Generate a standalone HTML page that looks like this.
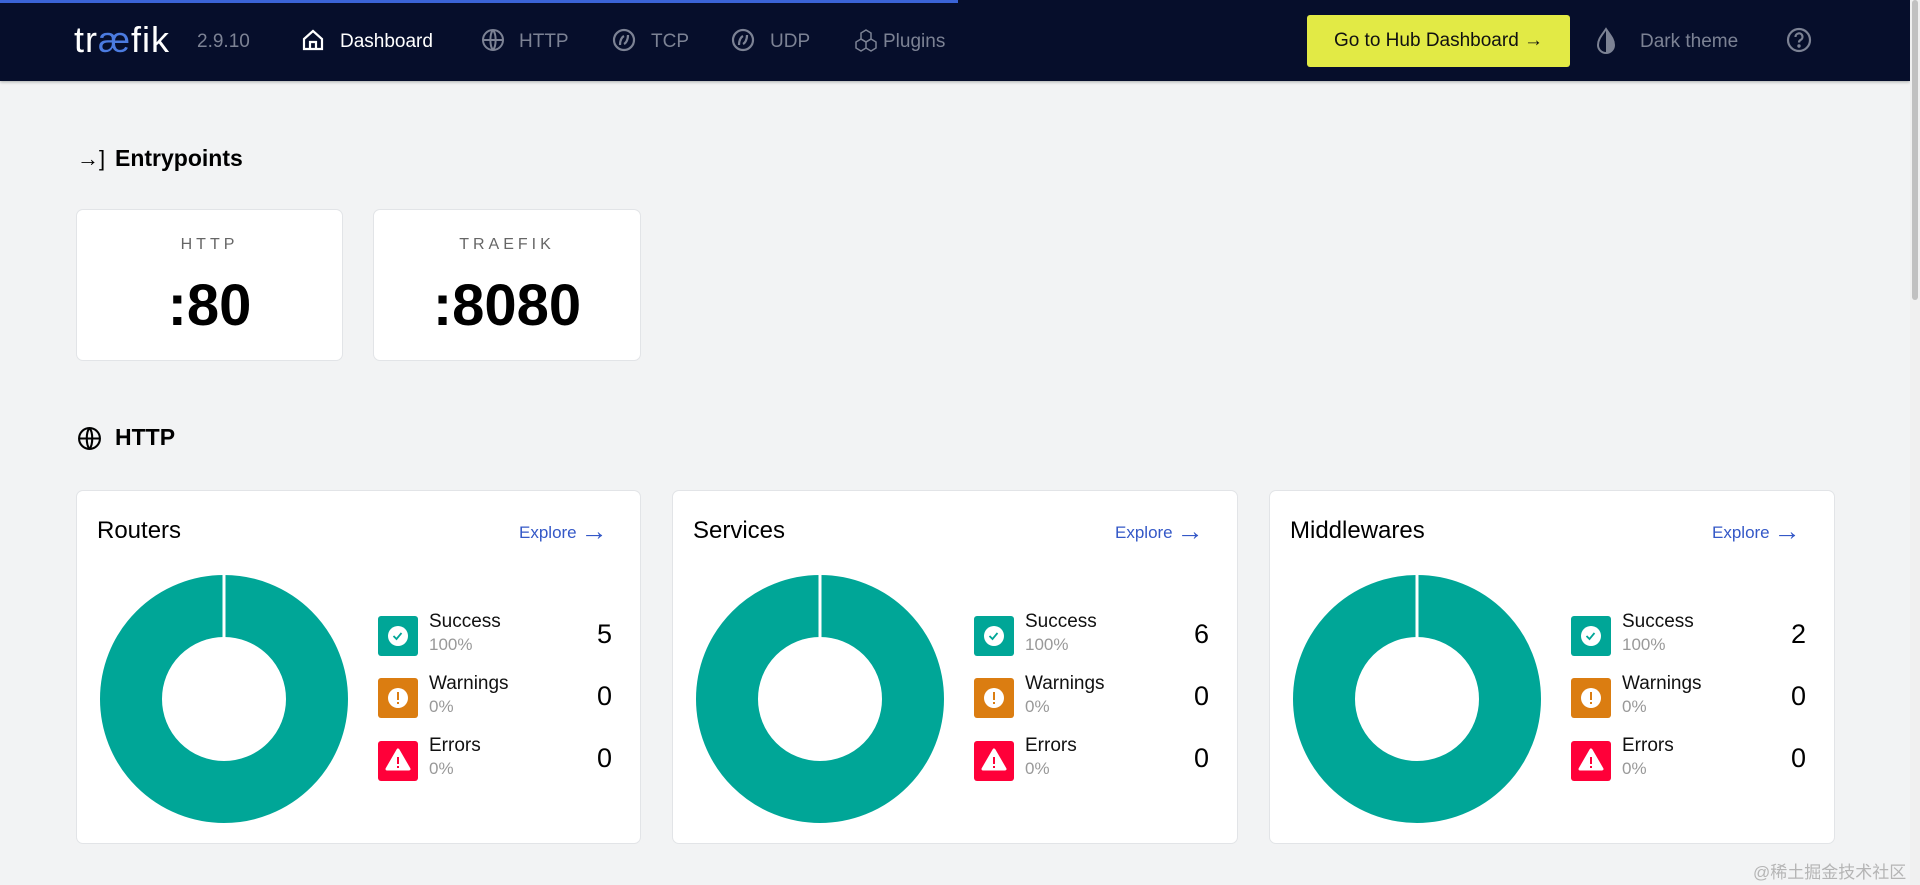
<!DOCTYPE html>
<html><head><meta charset="utf-8"><style>
*{margin:0;padding:0;box-sizing:border-box}
body{width:1920px;height:885px;overflow:hidden;background:#f2f3f4;font-family:"Liberation Sans",sans-serif;position:relative}
.a{position:absolute;white-space:nowrap}
.hdr{position:absolute;left:0;top:0;width:1910px;height:81px;background:#060e2b;box-shadow:0 1px 3px rgba(0,0,0,.3)}
.nav{color:#7c8294;font-size:19px;top:31px}
.card{position:absolute;background:#fff;border:1px solid #e2e4e7;border-radius:7px}
.ep .lbl{position:absolute;left:0;right:0;top:26px;text-align:center;font-size:16px;letter-spacing:4px;color:#666}
.ep .val{position:absolute;left:0;right:0;top:62px;text-align:center;font-size:58px;font-weight:bold;color:#000}
.title{left:20px;top:26px;font-size:24px;color:#000}
.explore{left:442px;top:23px;font-size:17px;color:#3458c7}
.explore span{font-size:27px;position:relative;top:2px;margin-left:4px}
.box{position:absolute;left:301px;width:40px;height:40px;border-radius:3px}
.lt{position:absolute;left:352px;font-size:19px;color:#111}
.lp{position:absolute;left:352px;font-size:17px;color:#999}
.num{position:absolute;right:28px;font-size:27px;color:#000}
</style></head><body>
<div class="hdr"></div>
<div class="a" style="left:0;top:0;width:958px;height:3px;background:#3a63d6"></div>
<div class="a" style="left:74px;top:19px;font-size:36px;color:#fff;letter-spacing:1px">tr<span style="color:#4b7be0">æ</span>fik</div>
<div class="a" style="left:197px;top:31px;font-size:19px;color:#7c8294">2.9.10</div>
<svg class="a" style="left:301px;top:28px" width="24" height="24" viewBox="0 0 24 24" fill="none" stroke="#fff" stroke-width="2.2"><path d="M3 11L12 3l9 8v10H3z"/><path d="M9 21v-7h6v7"/></svg>
<div class="a nav" style="left:340px;color:#fff">Dashboard</div>
<svg class="a" style="left:481px;top:28px" width="24" height="24" viewBox="0 0 24 24" fill="none" stroke="#7c8294" stroke-width="2"><circle cx="12" cy="12" r="10"/><path d="M2 12h20M12 2c-3.5 4-3.5 16 0 20M12 2c3.5 4 3.5 16 0 20"/></svg>
<div class="a nav" style="left:519px">HTTP</div>
<svg class="a" style="left:612px;top:28px" width="24" height="24" viewBox="0 0 24 24" fill="none" stroke="#7c8294" stroke-width="2.2"><circle cx="12" cy="12" r="10"/><path d="M8 17c0-5 2-8 4-9M16 7c0 5-2 8-4 9"/></svg>
<div class="a nav" style="left:651px">TCP</div>
<svg class="a" style="left:731px;top:28px" width="24" height="24" viewBox="0 0 24 24" fill="none" stroke="#7c8294" stroke-width="2.2"><circle cx="12" cy="12" r="10"/><path d="M8 17c0-5 2-8 4-9M16 7c0 5-2 8-4 9"/></svg>
<div class="a nav" style="left:770px">UDP</div>
<svg class="a" style="left:853px;top:28px" width="26" height="26" viewBox="0 0 26 26" fill="none" stroke="#7c8294" stroke-width="1.5"><path d="M13 2l5 3v6l-5 3-5-3V5z"/><path d="M8 11l5 3v6l-5 3-5-3v-6zM18 11l5 3v6l-5 3-5-3v-6z"/></svg>
<div class="a nav" style="left:883px">Plugins</div>
<div class="a" style="left:1307px;top:15px;width:263px;height:52px;background:#e2ea45;border-radius:3px;font-size:19px;color:#111;text-align:center;line-height:52px">Go to Hub Dashboard →</div>
<svg class="a" style="left:1594px;top:27px" width="24" height="28" viewBox="0 0 24 28"><path d="M12 2C8 8 4 12 4 18a8 8 0 0 0 16 0c0-6-4-10-8-16z" fill="none" stroke="#7c8294" stroke-width="2"/><path d="M12 2C16 8 20 12 20 18a8 8 0 0 1-8 8z" fill="#7c8294"/></svg>
<div class="a nav" style="left:1640px">Dark theme</div>
<svg class="a" style="left:1786px;top:27px" width="26" height="26" viewBox="0 0 26 26" fill="none" stroke="#7c8294" stroke-width="2.2"><circle cx="13" cy="13" r="11"/><path d="M9.5 10a3.5 3.5 0 1 1 5 3c-1.2.6-1.5 1.3-1.5 2.5"/><circle cx="13" cy="19" r=".6" fill="#7c8294"/></svg>
<div class="a" style="left:1910px;top:0;width:10px;height:885px;background:#f0f0f0"></div>
<div class="a" style="left:1912px;top:0;width:6px;height:300px;background:#c1c1c1;border-radius:3px"></div>

<div class="a" style="left:77px;top:146px;font-size:22px;color:#000">→]</div>
<div class="a" style="left:115px;top:145px;font-size:23px;color:#000;font-weight:600">Entrypoints</div>
<div class="card ep" style="left:76px;top:209px;width:267px;height:152px"><div class="lbl">HTTP</div><div class="val">:80</div></div>
<div class="card ep" style="left:373px;top:209px;width:268px;height:152px"><div class="lbl">TRAEFIK</div><div class="val">:8080</div></div>

<svg class="a" style="left:77px;top:426px" width="25" height="25" viewBox="0 0 24 24" fill="none" stroke="#000" stroke-width="2"><circle cx="12" cy="12" r="10"/><path d="M2 12h20M12 2c-3.5 4-3.5 16 0 20M12 2c3.5 4 3.5 16 0 20"/></svg>
<div class="a" style="left:115px;top:424px;font-size:23px;color:#000;font-weight:600">HTTP</div>

<div class="card" style="left:76px;top:490px;width:565px;height:354px">
<div class="a title">Routers</div><div class="a explore">Explore<span>→</span></div>
<svg class="a" style="left:21px;top:82px" width="252" height="252"><circle cx="126" cy="126" r="93" fill="none" stroke="#00a697" stroke-width="62"/><rect x="124.5" y="0" width="3" height="66" fill="#fff"/></svg>
<div class="box" style="top:125px;background:#00a697"><svg width="40" height="40"><circle cx="20" cy="20" r="10" fill="#fff"/><path d="M15.5 20l3 3 5-6" fill="none" stroke="#00a697" stroke-width="1.8"/></svg></div>
<div class="lt" style="top:120px">Success</div><div class="lp" style="top:144px">100%</div><div class="num" style="top:128px">5</div>
<div class="box" style="top:187px;background:#db7d11"><svg width="40" height="40"><circle cx="20" cy="20" r="10" fill="#fff"/><rect x="19" y="14" width="2" height="8" fill="#db7d11"/><rect x="19" y="24" width="2" height="2" fill="#db7d11"/></svg></div>
<div class="lt" style="top:182px">Warnings</div><div class="lp" style="top:206px">0%</div><div class="num" style="top:190px">0</div>
<div class="box" style="top:250px;background:#ff0039"><svg width="40" height="40"><path d="M20 9l11 19H9z" fill="#fff" stroke="#fff" stroke-width="3" stroke-linejoin="round"/><rect x="19" y="16" width="2" height="7" fill="#ff0039"/><rect x="19" y="25" width="2" height="2" fill="#ff0039"/></svg></div>
<div class="lt" style="top:244px">Errors</div><div class="lp" style="top:268px">0%</div><div class="num" style="top:252px">0</div>
</div>

<div class="card" style="left:672px;top:490px;width:566px;height:354px">
<div class="a title">Services</div><div class="a explore">Explore<span>→</span></div>
<svg class="a" style="left:21px;top:82px" width="252" height="252"><circle cx="126" cy="126" r="93" fill="none" stroke="#00a697" stroke-width="62"/><rect x="124.5" y="0" width="3" height="66" fill="#fff"/></svg>
<div class="box" style="top:125px;background:#00a697"><svg width="40" height="40"><circle cx="20" cy="20" r="10" fill="#fff"/><path d="M15.5 20l3 3 5-6" fill="none" stroke="#00a697" stroke-width="1.8"/></svg></div>
<div class="lt" style="top:120px">Success</div><div class="lp" style="top:144px">100%</div><div class="num" style="top:128px">6</div>
<div class="box" style="top:187px;background:#db7d11"><svg width="40" height="40"><circle cx="20" cy="20" r="10" fill="#fff"/><rect x="19" y="14" width="2" height="8" fill="#db7d11"/><rect x="19" y="24" width="2" height="2" fill="#db7d11"/></svg></div>
<div class="lt" style="top:182px">Warnings</div><div class="lp" style="top:206px">0%</div><div class="num" style="top:190px">0</div>
<div class="box" style="top:250px;background:#ff0039"><svg width="40" height="40"><path d="M20 9l11 19H9z" fill="#fff" stroke="#fff" stroke-width="3" stroke-linejoin="round"/><rect x="19" y="16" width="2" height="7" fill="#ff0039"/><rect x="19" y="25" width="2" height="2" fill="#ff0039"/></svg></div>
<div class="lt" style="top:244px">Errors</div><div class="lp" style="top:268px">0%</div><div class="num" style="top:252px">0</div>
</div>

<div class="card" style="left:1269px;top:490px;width:566px;height:354px">
<div class="a title">Middlewares</div><div class="a explore">Explore<span>→</span></div>
<svg class="a" style="left:21px;top:82px" width="252" height="252"><circle cx="126" cy="126" r="93" fill="none" stroke="#00a697" stroke-width="62"/><rect x="124.5" y="0" width="3" height="66" fill="#fff"/></svg>
<div class="box" style="top:125px;background:#00a697"><svg width="40" height="40"><circle cx="20" cy="20" r="10" fill="#fff"/><path d="M15.5 20l3 3 5-6" fill="none" stroke="#00a697" stroke-width="1.8"/></svg></div>
<div class="lt" style="top:120px">Success</div><div class="lp" style="top:144px">100%</div><div class="num" style="top:128px">2</div>
<div class="box" style="top:187px;background:#db7d11"><svg width="40" height="40"><circle cx="20" cy="20" r="10" fill="#fff"/><rect x="19" y="14" width="2" height="8" fill="#db7d11"/><rect x="19" y="24" width="2" height="2" fill="#db7d11"/></svg></div>
<div class="lt" style="top:182px">Warnings</div><div class="lp" style="top:206px">0%</div><div class="num" style="top:190px">0</div>
<div class="box" style="top:250px;background:#ff0039"><svg width="40" height="40"><path d="M20 9l11 19H9z" fill="#fff" stroke="#fff" stroke-width="3" stroke-linejoin="round"/><rect x="19" y="16" width="2" height="7" fill="#ff0039"/><rect x="19" y="25" width="2" height="2" fill="#ff0039"/></svg></div>
<div class="lt" style="top:244px">Errors</div><div class="lp" style="top:268px">0%</div><div class="num" style="top:252px">0</div>
</div>

<div class="a" style="left:1753px;top:858px;font-size:17px;color:#b5b5b5;font-family:'Liberation Sans','Noto Sans CJK SC',sans-serif">@稀土掘金技术社区</div>
</body></html>
